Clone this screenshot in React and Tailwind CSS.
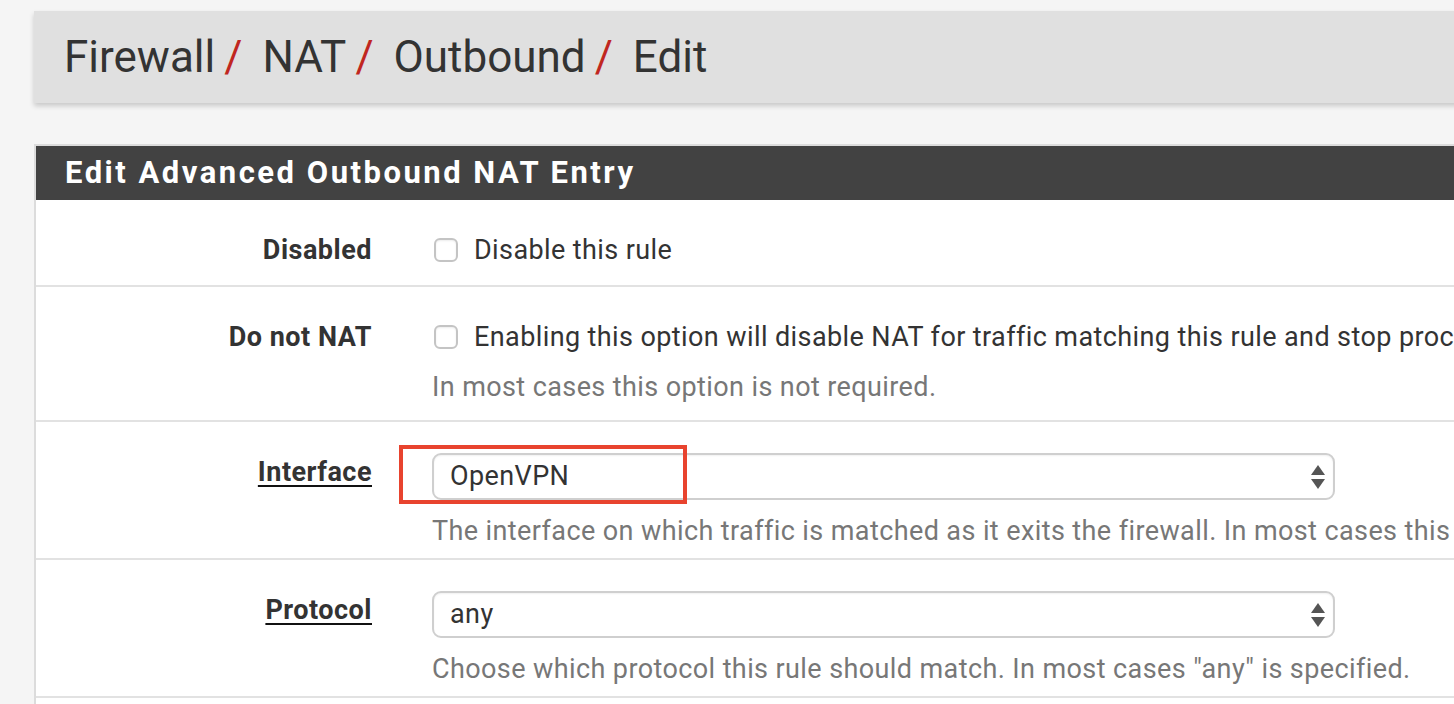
import React from 'react';

const font = { fontFamily: 'Roboto, "Liberation Sans", sans-serif' };

const Checkbox = () => (
    <span className="inline-block ml-[2px] w-[24px] h-[24px] rounded-[6px] border-2 border-[#c4c4c4] bg-white shadow-[inset_0_1px_2px_rgba(0,0,0,0.08)] shrink-0" />
);

const SelectBox = ({ value }) => (
    <div className="relative w-[903px] h-[47px] rounded-[9px] border-2 border-[#cfcfcf] bg-white flex items-center pl-[16px] text-[27px] tracking-[0.4px] text-[#333] shadow-[inset_0_1px_2px_rgba(0,0,0,0.06)]">
        {value}
        <svg className="absolute right-[7px] top-1/2 -translate-y-1/2" width="16" height="28" viewBox="0 0 16 28">
            <path d="M8 2 L15 12 L1 12 Z" fill="#555" />
            <path d="M1 16 L15 16 L8 26 Z" fill="#555" />
        </svg>
    </div>
);

const Row = ({ label, underline, children, h }) => (
    <div className={`flex border-b-2 border-[#e2e2e2] ${h}`}>
        <div className="w-[336px] shrink-0 flex justify-end pt-[30px]">
            <span className={`text-[27px] font-bold tracking-[0.5px] text-[#333] leading-[40px] ${underline ? 'underline decoration-[#111] decoration-2 underline-offset-[4px]' : ''}`}>{label}</span>
        </div>
        <div className="pl-[60px] flex flex-col">{children}</div>
    </div>
);

export default function App() {
    return (
        <div style={font} className="w-[1454px] h-[704px] overflow-hidden bg-[#f5f5f5]">
            <div className="ml-[34px] w-[1500px] pt-[11px]">
                <div className="h-[92px] bg-[#e0e0e0] shadow-[0_3px_5px_rgba(0,0,0,0.18)] flex items-center pl-[30px] text-[44px] text-[#333] whitespace-nowrap">
                    <span>Firewall</span>
                    <span className="text-[#c0271f] ml-[9px] mr-[20px]">/</span>
                    <span>NAT</span>
                    <span className="text-[#c0271f] ml-[9px] mr-[20px]">/</span>
                    <span>Outbound</span>
                    <span className="text-[#c0271f] ml-[9px] mr-[20px]">/</span>
                    <span>Edit</span>
                </div>

                <div className="mt-[41px] border-2 border-[#dcdcdc] bg-white">
                    <div className="h-[54px] bg-[#424242] flex items-center pl-[29px] text-[31px] font-bold text-white tracking-[2.5px]">
                        Edit Advanced Outbound NAT Entry
                    </div>

                    <Row label="Disabled" h="h-[87px]">
                        <label className="flex items-center gap-[16px] pt-[30px] text-[27px] tracking-[0.4px] text-[#333] leading-[40px]">
                            <Checkbox /> Disable this rule
                        </label>
                    </Row>

                    <Row label="Do not NAT" h="h-[135px]">
                        <label className="flex items-center gap-[16px] pt-[30px] text-[27px] tracking-[0.4px] text-[#333] leading-[40px] whitespace-nowrap">
                            <Checkbox /> Enabling this option will disable NAT for traffic matching this rule and stop processing Outbound NAT rules.
                        </label>
                        <p className="mt-[10px] text-[27px] tracking-[0.4px] text-[#777] leading-[40px] whitespace-nowrap">In most cases this option is not required.</p>
                    </Row>

                    <Row label="Interface" underline h="h-[138px]">
                        <div className="relative pt-[31px]">
                            <SelectBox value="OpenVPN" />
                            <div className="absolute left-[-33px] top-[23px] w-[288px] h-[59px] border-[4px] border-[#e8432e]" />
                        </div>
                        <p className="mt-[11px] text-[27px] tracking-[0.4px] text-[#777] leading-[40px] whitespace-nowrap">The interface on which traffic is matched as it exits the firewall. In most cases this is "WAN" or another externally-connected interface.</p>
                    </Row>

                    <Row label="Protocol" underline h="h-[138px]">
                        <div className="pt-[31px]">
                            <SelectBox value="any" />
                        </div>
                        <p className="mt-[11px] text-[27px] tracking-[0.4px] text-[#777] leading-[40px] whitespace-nowrap">Choose which protocol this rule should match. In most cases "any" is specified.</p>
                    </Row>

                    <div className="h-[40px]" />
                </div>
            </div>
        </div>
    );
}
